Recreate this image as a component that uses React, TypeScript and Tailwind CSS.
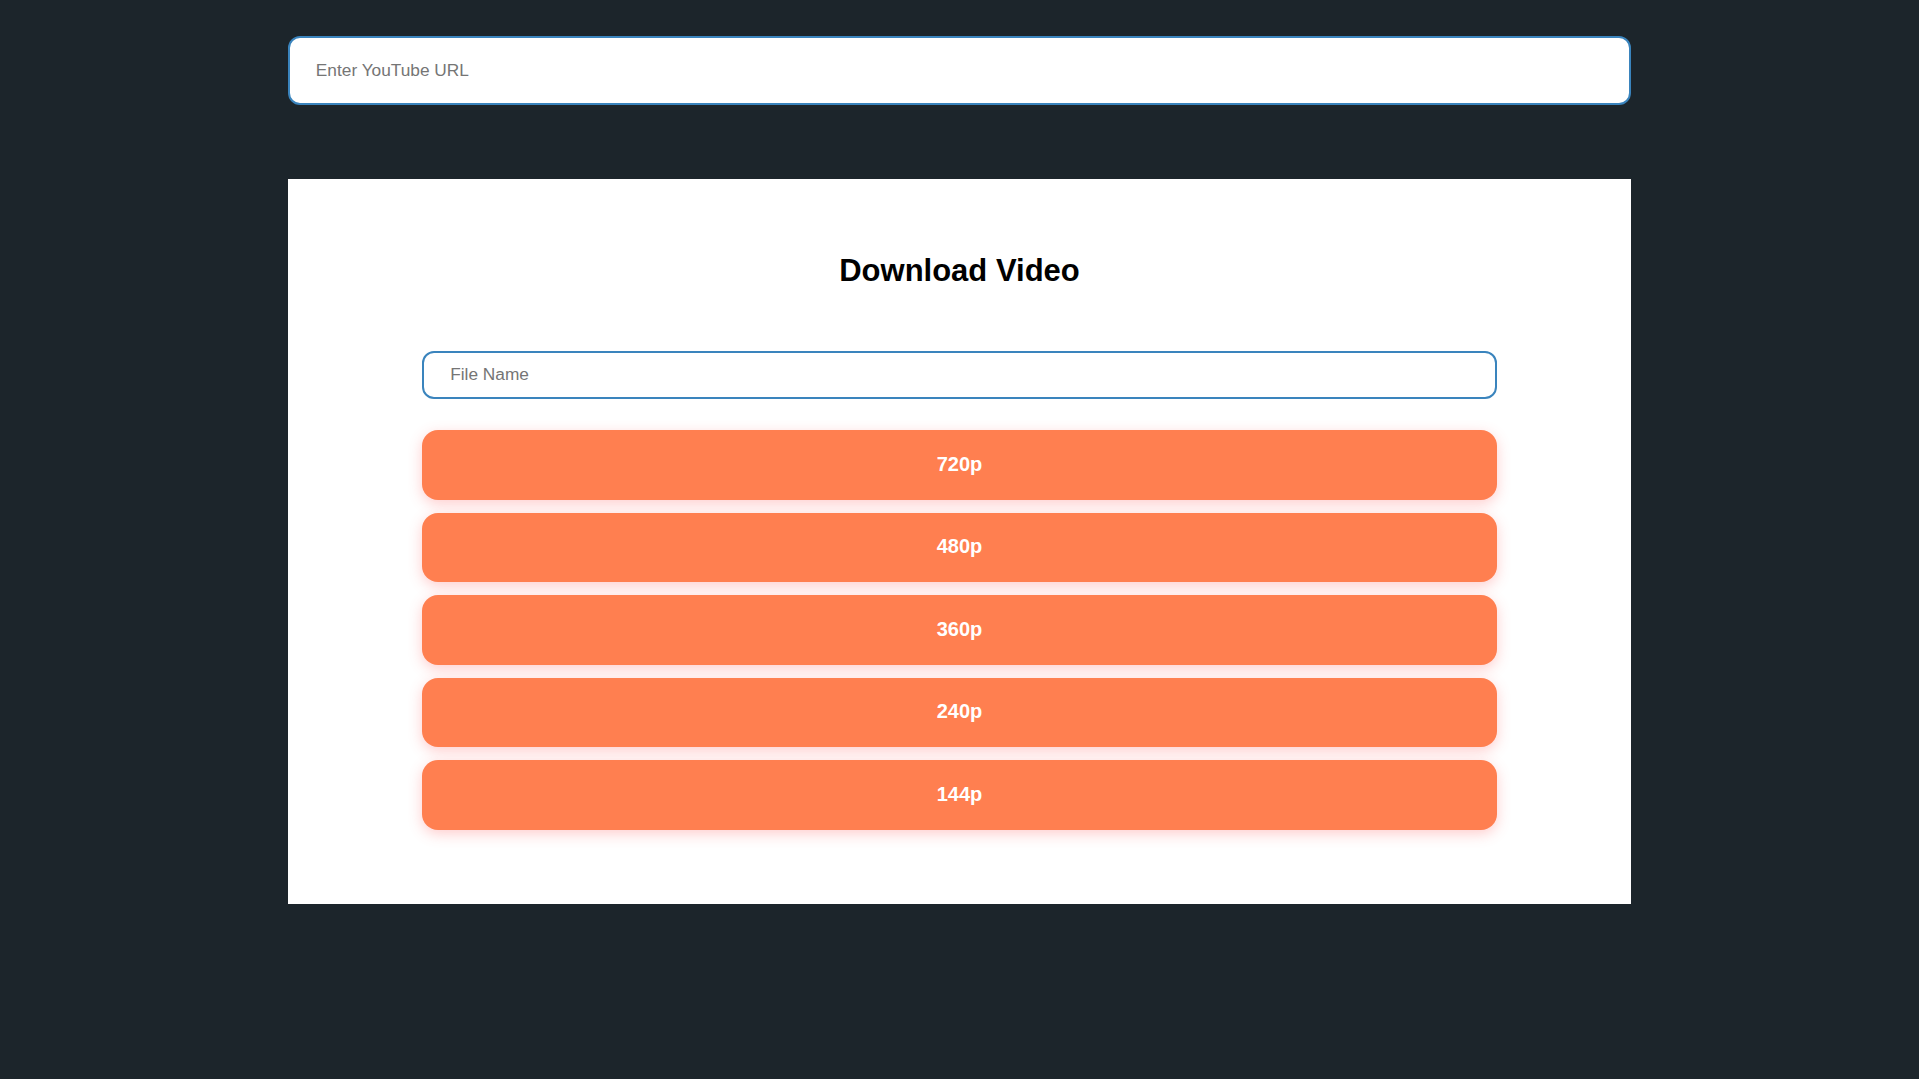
import React from "react";

const qualities = ["720p", "480p", "360p", "240p", "144p"];

export default function App() {
  return (
    <div
      className="min-h-[1079px] w-full bg-[#1c252b] pt-[36px]"
      style={{ fontFamily: '"Liberation Sans", Arial, sans-serif' }}
    >
      <div className="mx-auto w-[70%]">
        <input
          type="text"
          placeholder="Enter YouTube URL"
          className="block h-[69px] w-full rounded-[12px] border-2 border-[#3a84bd] bg-white px-[26px] text-[17.3px] text-black outline-none placeholder:text-[#757575]"
        />
        <div className="mt-[74px] flex h-[725px] flex-col items-center bg-white pt-[74px]">
          <h2 className="h-[36px] text-[31px] font-bold leading-[36px] text-black">
            Download Video
          </h2>
          <div className="mt-[62px] flex w-[80%] flex-col">
            <input
              type="text"
              placeholder="File Name"
              className="block h-[48px] w-full rounded-[12px] border-2 border-[#3a84bd] bg-white px-[26px] pb-[2px] text-[17.3px] text-black outline-none placeholder:text-[#757575]"
            />
            <div className="mt-[31px] flex flex-col gap-[13px]">
              {qualities.map((q) => (
                <button
                  key={q}
                  className="flex h-[69.5px] w-full items-center justify-center rounded-[16px] bg-[#ff7f50] pb-[2px] text-[20px] font-bold text-white shadow-[0_4px_14px_rgba(255,90,90,0.3)]"
                >
                  {q}
                </button>
              ))}
            </div>
          </div>
        </div>
      </div>
    </div>
  );
}
